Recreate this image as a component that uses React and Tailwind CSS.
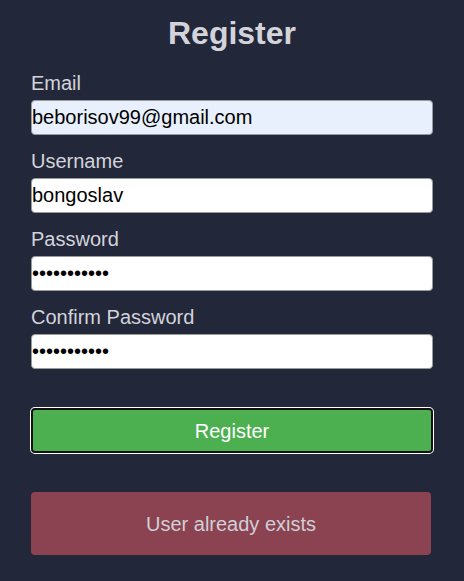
import React from "react";

function Field({ label, type, value, autofill }) {
  return (
    <div className="flex flex-col">
      <label className="text-[20px] leading-[23px] text-[#d3d4da]">{label}</label>
      <input
        type={type}
        defaultValue={value}
        readOnly
        className={`mt-[5px] h-[35px] w-full rounded-[4px] border border-[#9a9a9a] px-0 text-[20px] text-black outline-none ${
          autofill ? "bg-[#e8f0fe]" : "bg-white"
        }`}
        style={{ fontFamily: '"Liberation Sans", Arial, sans-serif' }}
      />
    </div>
  );
}

export default function App() {
  return (
    <div
      className="min-h-[581px] w-full bg-[#23273a] px-[31px] pt-[15px]"
      style={{ fontFamily: '"Liberation Sans", Arial, sans-serif' }}
    >
      <h1 className="text-center text-[32px] font-bold leading-[37px] text-[#d3d4da]">Register</h1>
      <div className="mt-[20px] flex flex-col gap-[15px]">
        <Field label="Email" type="text" value="beborisov99@gmail.com" autofill />
        <Field label="Username" type="text" value="bongoslav" />
        <Field label="Password" type="password" value="12345678901" />
        <Field label="Confirm Password" type="password" value="12345678901" />
      </div>
      <button className="mt-[39px] flex h-[45px] w-full items-center justify-center rounded-[4px] border-2 border-[#111111] bg-[#4caf50] text-[20px] text-white shadow-[0_0_0_1px_#ffffff]">
        Register
      </button>
      <div className="mt-[39px] flex h-[63px] w-[400px] items-center justify-center rounded-[4px] bg-[#8b4352] text-[20px] text-[#cfcfd6]">
        User already exists
      </div>
    </div>
  );
}
